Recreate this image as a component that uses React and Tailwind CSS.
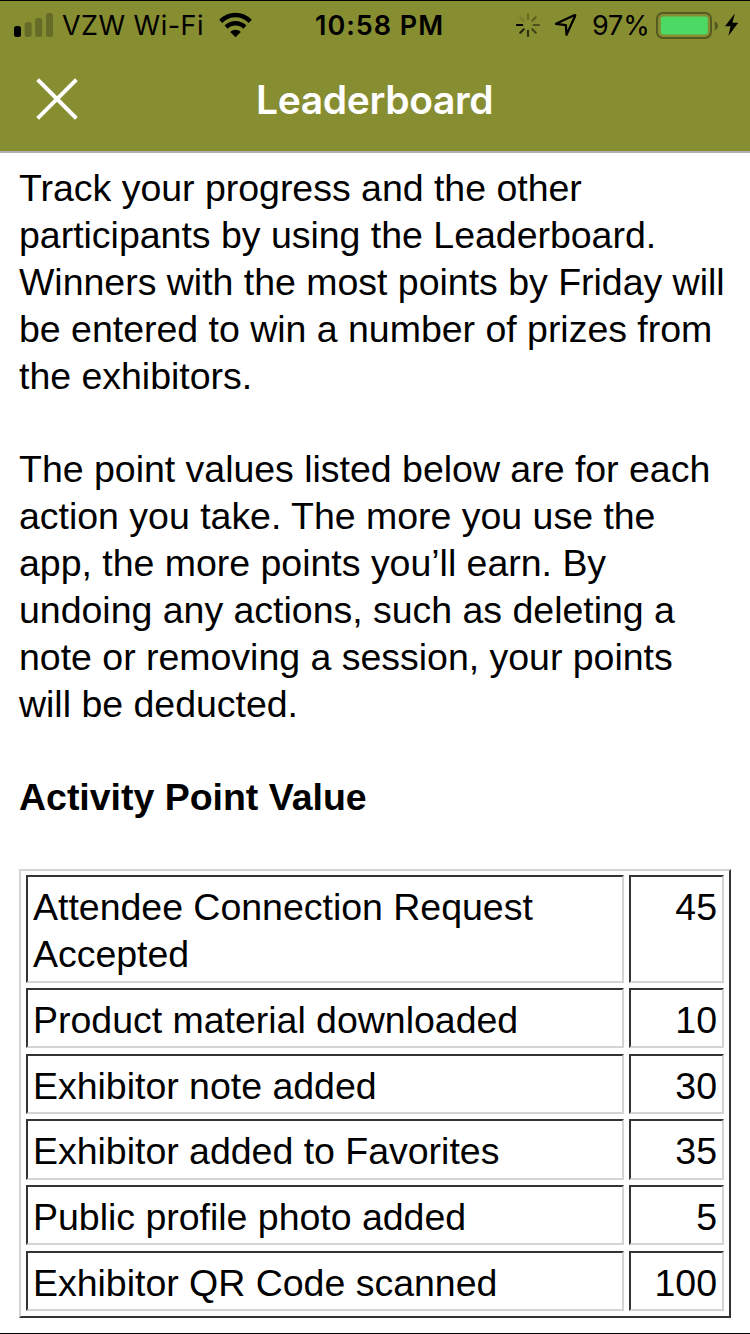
const rows = [
  { label: ['Attendee Connection Request', 'Accepted'], points: '45', size: 'h-[108px] mb-[5px]' },
  { label: ['Product material downloaded'], points: '10', size: 'h-[60px] mb-[6px]' },
  { label: ['Exhibitor note added'], points: '30', size: 'h-[60px] mb-[5px]' },
  { label: ['Exhibitor added to Favorites'], points: '35', size: 'h-[61px] mb-[5px]' },
  { label: ['Public profile photo added'], points: '5', size: 'h-[60px] mb-[6px]' },
  { label: ['Exhibitor QR Code scanned'], points: '100', size: 'h-[60px]' },
];

const cell =
  'border-2 border-t-[#333436] border-l-[#333436] border-r-[#d4d4d4] border-b-[#d4d4d4] pt-[7px]';

function Line({ children }) {
  return <span className="block whitespace-nowrap">{children}</span>;
}

function Signal() {
  return (
    <svg className="ml-[14px] mt-[11px] h-[25px] w-[39px] shrink-0" viewBox="0 0 39 25">
      <rect x="0" y="14" width="7" height="11" rx="2.5" fill="#000" />
      <g fill="#666c28">
        <rect x="10.7" y="10" width="7" height="15" rx="2.5" />
        <rect x="21.2" y="6" width="7" height="19" rx="2.5" />
        <rect x="32" y="1" width="7" height="24" rx="2.5" />
      </g>
    </svg>
  );
}

function Wifi() {
  return (
    <svg className="ml-[15px] mt-[11px] h-[26px] w-[33px] shrink-0" viewBox="0 0 34 26" preserveAspectRatio="none">
      <g fill="none" stroke="#000" strokeWidth="4.5">
        <path d="M1.8 9.4C10.3.9 23.7.9 32.2 9.4" />
        <path d="M7.3 15.2C12.7 9.9 21.3 9.9 26.7 15.2" />
      </g>
      <path d="M11.6 19.9C14.7 17.1 19.3 17.1 22.4 19.9L17 25.2Z" fill="#000" />
    </svg>
  );
}

function Spinner() {
  return (
    <svg className="ml-[71px] mt-[12px] h-[24px] w-[24px] shrink-0" viewBox="0 0 24 24">
      <g stroke="#000" strokeWidth="2.1" strokeLinecap="round">
        <path d="M1 12H6.3" />
        <path d="M4.3 19.7L7.7 16.3" opacity=".75" />
        <path d="M12 23V17.7" opacity=".65" />
        <path d="M19.7 19.7L16.3 16.3" opacity=".5" />
        <path d="M23 12H17.7" opacity=".42" />
        <path d="M19.7 4.3L16.3 7.7" opacity=".33" />
        <path d="M12 1V6.3" opacity=".22" />
        <path d="M4.3 4.3L7.7 7.7" opacity=".12" />
      </g>
    </svg>
  );
}

function Battery() {
  return (
    <svg className="ml-[7px] mt-[10px] h-[29px] w-[64px] shrink-0" viewBox="0 0 64 29">
      <rect x="1" y="2" width="54" height="25" rx="6" fill="none" stroke="#545a20" strokeWidth="2" />
      <rect x="4.8" y="5.5" width="47" height="18" rx="2.5" fill="#4cd964" />
      <path d="M58.7 10.2C63.2 12 63.2 17.5 58.7 19.2Z" fill="#545a20" />
    </svg>
  );
}

export default function App() {
  return (
    <div className="flex h-[1334px] w-[750px] flex-col overflow-hidden border-y border-black bg-white font-['Liberation_Sans',Arial,sans-serif] text-[37.5px] leading-[46.9px] tracking-[-0.02px] text-black">
      <header className="h-[152px] shrink-0 border-b-2 border-[#b0b0b0] bg-[#878d31] font-['Inter',sans-serif]">
        <div className="flex h-[50px] items-start">
          <Signal />
          <span className="ml-[9px] mt-[8px] w-[142px] whitespace-nowrap text-[27px] leading-[34px] tracking-[0.45px]">VZW Wi-Fi</span>
          <Wifi />
          <span className="ml-[63px] mt-[8px] w-[130px] whitespace-nowrap text-[27px] font-semibold leading-[34px] tracking-[0.98px]">10:58 PM</span>
          <Spinner />
          <svg className="ml-[14px] mt-[12px] h-[24px] w-[24px] shrink-0" viewBox="0 0 24 24">
            <path d="M2 10.8L20.2 2.3Q21.7 1.7 21 3.2L12.5 21.8L11.9 12.2Z" fill="none" stroke="#000" strokeWidth="2.3" strokeLinejoin="round" />
          </svg>
          <span className="ml-[14px] mt-[8px] w-[57px] whitespace-nowrap text-[27px] leading-[34px] tracking-[-0.1px]">97%</span>
          <Battery />
          <svg className="ml-[5px] mt-[12px] h-[24px] w-[14px] shrink-0" viewBox="0 0 14 24">
            <path d="M9.8.5L0 13.2H5.6L3.4 23L13.2 9.8H7.5Z" fill="#000" />
          </svg>
        </div>
        <div className="flex h-[100px]">
          <svg className="ml-[36px] mt-[27px] h-[42px] w-[42px] shrink-0" viewBox="0 0 42 42">
            <path d="M3 3L39 39M39 3L3 39" stroke="#fff" strokeWidth="3.9" strokeLinecap="square" />
          </svg>
          <h1 className="ml-[178px] mt-[25px] whitespace-nowrap text-[39px] font-semibold leading-[48px] tracking-[-0.35px] text-white">Leaderboard</h1>
        </div>
      </header>

      <main className="pl-[19px] pt-[12px]">
        <p>
          <Line>Track your progress and the other</Line>
          <Line>participants by using the Leaderboard.</Line>
          <Line>Winners with the most points by Friday will</Line>
          <Line>be entered to win a number of prizes from</Line>
          <Line>the exhibitors.</Line>
        </p>
        <p className="mt-[46.8px]">
          <Line>The point values listed below are for each</Line>
          <Line>action you take. The more you use the</Line>
          <Line>app, the more points you’ll earn. By</Line>
          <Line>undoing any actions, such as deleting a</Line>
          <Line>note or removing a session, your points</Line>
          <Line>will be deducted.</Line>
        </p>
        <h2 className="mt-[46.2px] font-bold">Activity Point Value</h2>
        <div className="mt-[48.6px] h-[449px] w-[712px] border-2 border-b-[#333436] border-l-[#d4d4d4] border-r-[#333436] border-t-[#d4d4d4] pl-[5px] pt-[4px]">
          {rows.map((row) => (
            <div key={row.points} className={`flex gap-[5px] ${row.size}`}>
              <div className={`w-[598px] pl-[5px] ${cell}`}>
                {row.label.map((text) => (
                  <Line key={text}>{text}</Line>
                ))}
              </div>
              <div className={`w-[95px] pr-[5px] text-right ${cell}`}>{row.points}</div>
            </div>
          ))}
        </div>
      </main>
    </div>
  );
}
